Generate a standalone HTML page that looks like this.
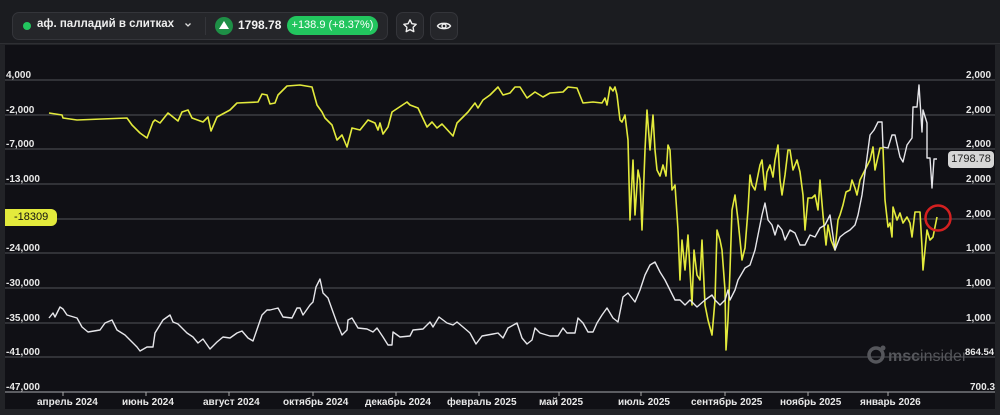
<!DOCTYPE html>
<html><head><meta charset="utf-8"><style>
*{margin:0;padding:0;box-sizing:border-box}
body{width:1000px;height:415px;overflow:hidden;background:#222327;font-family:"Liberation Sans",sans-serif;position:relative}
.hdr{position:absolute;left:0;top:0;width:1000px;height:44px;background:#1b1c20;border-bottom:1px solid #2e2f33}
.box{position:absolute;top:12px;height:28px;background:#25262a;border:1px solid #34353a;border-radius:7px}
.chart{position:absolute;left:5px;top:45px;width:990px;height:364px;background:#101015}
.t{position:absolute;font-size:10px;color:#e8e8e8;font-weight:bold}
</style></head><body>
<div class="hdr"></div>
<div class="box" style="left:12px;width:376px"></div>
<div style="position:absolute;left:23px;top:22px;width:8px;height:8px;border-radius:50%;background:#22c55e"></div>
<div style="position:absolute;left:37px;top:18px;font-size:11.5px;font-weight:bold;color:#eee">аф. палладий в слитках</div>
<svg style="position:absolute;left:184px;top:22px" width="8" height="6" viewBox="0 0 8 6"><path d="M1.5 1.5L4 4 6.5 1.5" fill="none" stroke="#ddd" stroke-width="1.3"/></svg>
<div style="position:absolute;left:205px;top:17px;width:1px;height:18px;background:#34353a"></div>
<div style="position:absolute;left:215px;top:17px;width:18px;height:18px;border-radius:50%;background:#1e8f46"></div>
<div style="position:absolute;left:219px;top:21px;width:0;height:0;border-left:5px solid transparent;border-right:5px solid transparent;border-bottom:8px solid #fff"></div>
<div style="position:absolute;left:238px;top:18px;font-size:12px;font-weight:bold;color:#f2f2f2">1798.78</div>
<div style="position:absolute;left:287px;top:16px;width:91px;height:19px;border-radius:10px;background:#22c55e;color:#fff;font-size:11px;line-height:19px;text-align:center">+138.9 (+8.37%)</div>
<div class="box" style="left:396px;width:28px"></div>
<svg style="position:absolute;left:402px;top:18px" width="16" height="16" viewBox="0 0 16 16"><path d="M8 1.8l1.9 3.9 4.3.6-3.1 3 .7 4.3L8 11.6l-3.8 2 .7-4.3-3.1-3 4.3-.6z" fill="none" stroke="#eee" stroke-width="1.4" stroke-linejoin="round"/></svg>
<div class="box" style="left:430px;width:28px"></div>
<svg style="position:absolute;left:436px;top:18px" width="16" height="16" viewBox="0 0 16 16"><path d="M1.5 8C3.5 4.5 12.5 4.5 14.5 8 12.5 11.5 3.5 11.5 1.5 8z" fill="none" stroke="#eee" stroke-width="1.4"/><circle cx="8" cy="8" r="2" fill="none" stroke="#eee" stroke-width="1.4"/></svg>
<div class="chart"></div>
<svg style="position:absolute;left:0;top:0" width="1000" height="415">
<g stroke="#45464c" stroke-width="1.3">
<line x1="5" y1="80" x2="995" y2="80"/><line x1="5" y1="115" x2="995" y2="115"/><line x1="5" y1="149" x2="995" y2="149"/><line x1="5" y1="184" x2="995" y2="184"/><line x1="5" y1="219" x2="995" y2="219"/><line x1="5" y1="253" x2="995" y2="253"/><line x1="5" y1="288" x2="995" y2="288"/><line x1="5" y1="323" x2="995" y2="323"/><line x1="5" y1="357" x2="995" y2="357"/>
</g>
<line x1="5" y1="392" x2="995" y2="392" stroke="#8a8b90" stroke-width="1.3"/>
<g stroke="#aaa" stroke-width="1"><line x1="63" y1="392" x2="63" y2="396"/><line x1="146" y1="392" x2="146" y2="396"/><line x1="229" y1="392" x2="229" y2="396"/><line x1="313" y1="392" x2="313" y2="396"/><line x1="396" y1="392" x2="396" y2="396"/><line x1="479" y1="392" x2="479" y2="396"/><line x1="559" y1="392" x2="559" y2="396"/><line x1="641" y1="392" x2="641" y2="396"/><line x1="725" y1="392" x2="725" y2="396"/><line x1="808" y1="392" x2="808" y2="396"/><line x1="888" y1="392" x2="888" y2="396"/></g>
<g fill="#55565b"><circle cx="876" cy="355" r="7" fill="none" stroke="#55565b" stroke-width="3.5"/><circle cx="883" cy="348" r="2.5"/></g>
<text x="888" y="361" font-family="Liberation Sans" font-size="16" fill="#55565b" font-weight="bold">msc<tspan font-weight="normal">insider</tspan></text>
<polyline fill="none" stroke="#e3ea3c" stroke-width="1.6" stroke-linejoin="round" points="49,113 62,115 63,118 77,120 127,118 132,125 140,133 147,138 153,122 155,120 160,123 168,113 178,121 182,112 188,110 192,118 203,122 208,117 211,131 217,117 230,110 237,103 258,102 262,94 267,95 270,104 275,103 278,95 287,86 300,85 312,87 317,105 322,112 325,118 332,125 337,140 342,135 347,147 352,128 360,130 368,120 375,123 378,130 380,123 383,134 388,127 392,112 398,108 407,102 410,105 418,108 427,127 432,122 437,128 442,124 453,136 457,123 468,112 475,103 478,108 483,100 490,95 498,87 503,95 510,93 515,87 520,87 527,98 535,92 543,97 550,93 563,92 568,87 577,88 583,103 593,102 602,103 605,98 607,105 610,87 613,91 615,87 617,95 620,120 622,122 625,115 628,140 630,220 633,160 635,215 638,170 640,180 642,230 645,150 647,110 650,150 653,115 655,150 657,170 660,176 663,165 666,176 668,145 670,150 672,190 675,185 678,230 680,280 682,240 685,270 688,235 690,270 692,305 694,250 697,275 700,280 702,240 705,305 708,320 712,335 715,300 717,230 720,240 722,250 725,290 726,350 728,320 730,270 732,210 735,195 738,220 740,240 742,260 745,248 748,210 750,175 752,185 755,190 758,175 760,165 762,160 765,190 767,172 770,165 773,177 775,160 778,145 780,180 782,195 785,175 788,150 790,150 793,170 797,160 800,172 803,195 805,230 808,198 812,198 815,195 818,210 820,180 823,215 826,245 828,225 831,240 835,250 838,220 840,215 843,205 846,192 850,190 852,180 855,188 857,195 860,180 865,170 870,160 873,147 875,170 880,148 883,148 885,200 888,227 890,223 892,237 893,207 897,220 900,213 903,223 907,217 910,223 912,237 915,212 920,212 922,247 923,270 927,230 930,240 933,237 937,217"/>
<polyline fill="none" stroke="#e6e6ea" stroke-width="1.4" stroke-linejoin="round" points="49,318 53,313 55,317 60,307 63,309 67,315 77,318 82,327 88,332 100,330 105,323 112,320 117,330 125,335 132,342 137,347 140,351 147,347 153,347 155,333 163,320 170,315 173,322 178,324 187,333 193,337 198,343 203,339 210,349 217,342 223,337 230,338 237,333 242,331 248,338 253,341 262,315 267,310 270,310 278,308 283,317 292,318 297,308 300,308 303,315 310,305 313,302 316,287 320,279 323,293 328,298 333,312 337,323 342,335 347,330 348,320 352,318 358,328 367,329 373,332 377,328 383,337 388,345 392,345 393,332 400,337 410,336 413,330 423,329 430,322 433,327 439,317 447,323 453,325 457,322 463,327 470,333 476,344 482,336 493,334 498,333 503,338 508,328 517,323 522,338 527,344 532,340 535,328 540,333 550,336 558,336 563,328 567,333 575,333 578,318 583,323 588,332 593,332 597,323 602,315 607,308 613,318 618,322 623,297 628,293 635,302 640,290 645,275 650,265 655,262 660,272 665,280 670,290 675,300 680,300 685,305 690,300 697,307 705,300 712,295 715,300 720,305 725,300 728,290 730,300 735,290 738,280 745,268 750,265 755,250 758,235 762,215 765,203 768,220 772,225 775,235 778,225 782,230 785,240 790,230 795,233 800,245 805,245 810,235 815,237 820,228 825,225 830,215 835,250 840,237 845,233 850,230 855,225 858,215 862,195 866,165 870,135 874,130 878,122 882,122 883,147 888,148 892,135 895,135 900,157 903,162 907,145 912,138 913,107 917,107 919,85 922,132 923,110 927,123 927,158 930,158 932,188 934,159 937,159"/>
<circle cx="938" cy="218" r="12.5" fill="none" stroke="#d42020" stroke-width="2.5"/>
</svg>
<div class="t" style="left:6px;top:70px">4,000</div>
<div class="t" style="left:6px;top:105px">-2,000</div>
<div class="t" style="left:6px;top:139px">-7,000</div>
<div class="t" style="left:6px;top:174px">-13,000</div>
<div class="t" style="left:6px;top:243px">-24,000</div>
<div class="t" style="left:6px;top:278px">-30,000</div>
<div class="t" style="left:6px;top:313px">-35,000</div>
<div class="t" style="left:6px;top:347px">-41,000</div>
<div class="t" style="left:6px;top:382px">-47,000</div>
<div style="position:absolute;left:5px;top:209px;width:52px;height:17px;background:#e3ea3c;border-radius:0 6px 6px 0;color:#111;font-size:11px;line-height:17px;padding-left:9px">-18309</div>
<div class="t" style="left:966px;top:70px">2,000</div>
<div class="t" style="left:966px;top:105px">2,000</div>
<div class="t" style="left:966px;top:139px">2,000</div>
<div class="t" style="left:966px;top:174px">2,000</div>
<div class="t" style="left:966px;top:209px">2,000</div>
<div class="t" style="left:966px;top:243px">1,000</div>
<div class="t" style="left:966px;top:278px">1,000</div>
<div class="t" style="left:966px;top:313px">1,000</div>
<div class="t" style="left:965px;top:347px;font-size:9.5px">864.54</div>
<div class="t" style="left:970px;top:382px">700.3</div>
<div style="position:absolute;left:948px;top:151px;width:46px;height:17px;background:#d6d6d6;border-radius:4px;color:#222;font-size:11px;line-height:17px;text-align:center">1798.78</div>
<div class="t" style="left:37px;top:397px">апрель 2024</div>
<div class="t" style="left:122px;top:397px">июнь 2024</div>
<div class="t" style="left:203px;top:397px">август 2024</div>
<div class="t" style="left:283px;top:397px">октябрь 2024</div>
<div class="t" style="left:365px;top:397px">декабрь 2024</div>
<div class="t" style="left:447px;top:397px">февраль 2025</div>
<div class="t" style="left:539px;top:397px">май 2025</div>
<div class="t" style="left:618px;top:397px">июль 2025</div>
<div class="t" style="left:691px;top:397px">сентябрь 2025</div>
<div class="t" style="left:780px;top:397px">ноябрь 2025</div>
<div class="t" style="left:860px;top:397px">январь 2026</div>
</body></html>
